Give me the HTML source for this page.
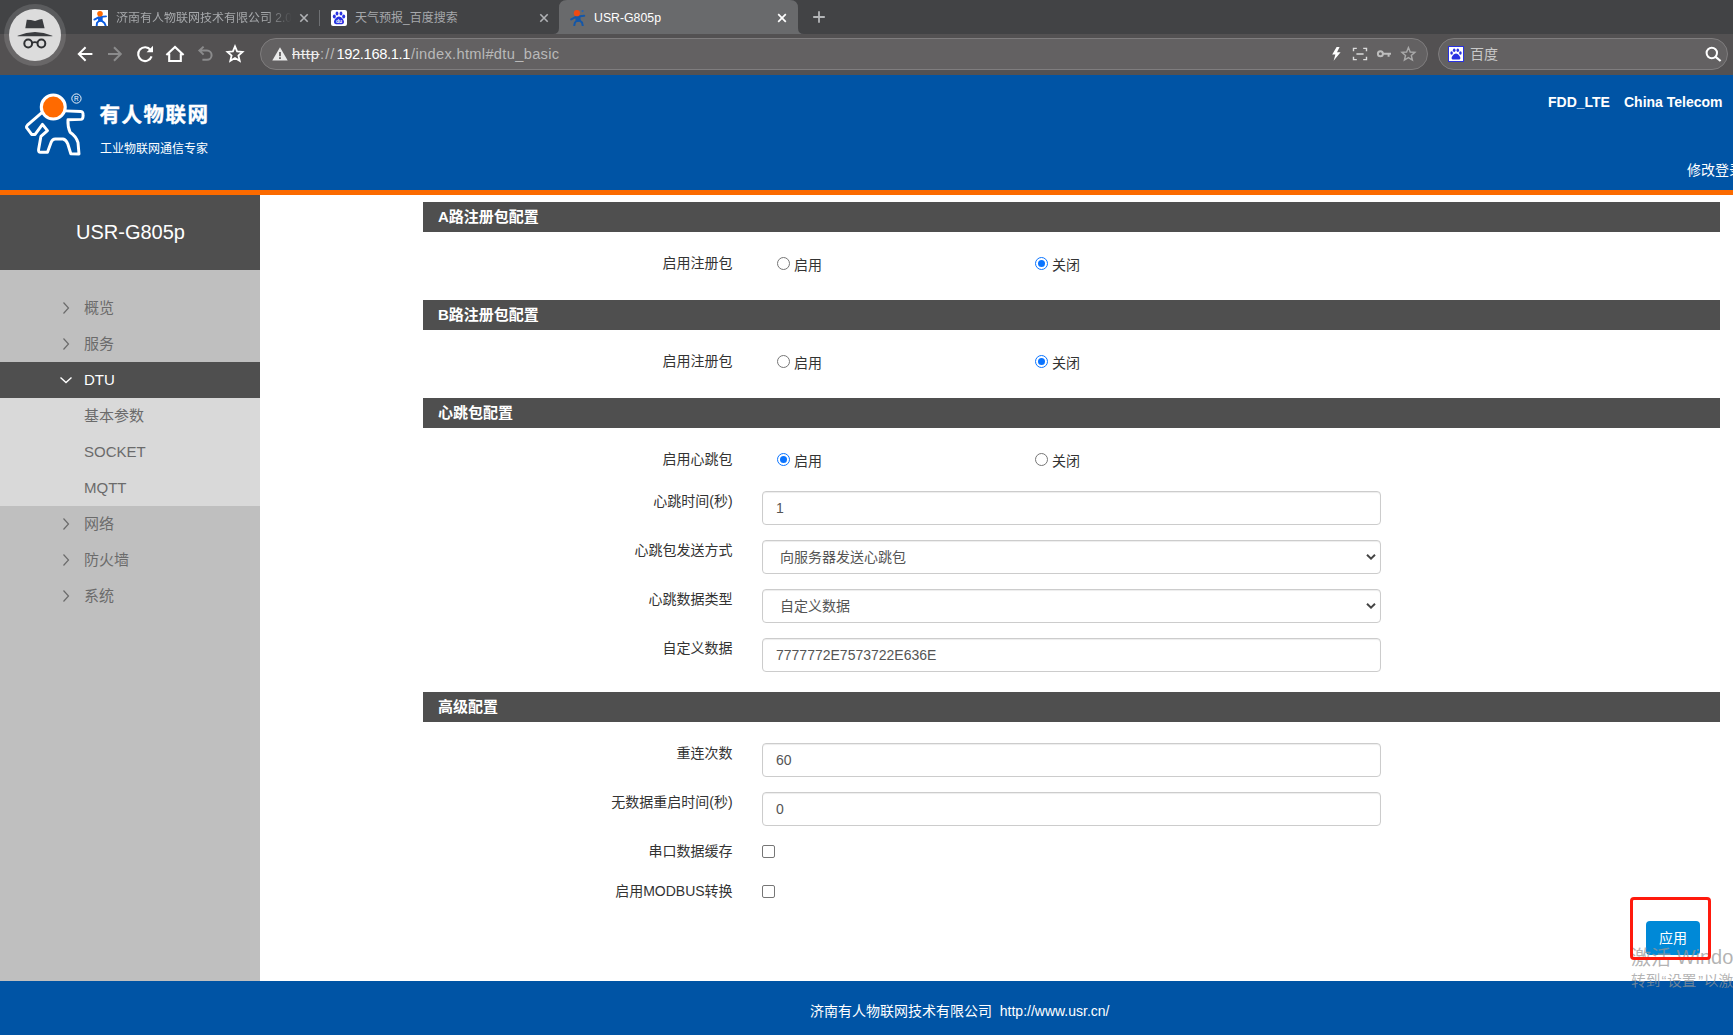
<!DOCTYPE html>
<html lang="zh-CN">
<head>
<meta charset="utf-8">
<title>USR-G805p</title>
<style>
*{box-sizing:border-box;margin:0;padding:0}
html,body{width:1733px;height:1035px;overflow:hidden;background:#fff}
body{position:relative;font-family:"Liberation Sans","Noto Sans CJK SC",sans-serif;font-size:14px;color:#333}
.abs{position:absolute}
.t{position:absolute;white-space:nowrap;line-height:1}
/* browser chrome */
#tabstrip{left:0;top:0;width:1733px;height:34px;background:#424345}
#toolbar{left:0;top:34px;width:1733px;height:41px;background:#535152}
.pill{position:absolute;top:38px;height:32px;border-radius:16px;background:#636162;border:1px solid #7f7d7e}
.tabtxt{font-size:12px;color:#a6a8ab;top:12px}
/* page */
#hdr{left:0;top:75px;width:1733px;height:115px;background:#0054a5}
#orange{left:0;top:190px;width:1733px;height:5px;background:#fb6a00}
#side{left:0;top:195px;width:260px;height:786px;background:#bfbfbf}
#sidehead{left:0;top:0;width:260px;height:75px;background:#4f4f4f}
.mi{position:absolute;left:0;width:260px;height:36px}
.mi .t{left:84px;top:10px;font-size:15px;color:#6b6b6b}
.mi svg{position:absolute}
#foot{left:0;top:981px;width:1733px;height:54px;background:#0054a5}
.sec{position:absolute;left:423px;width:1297px;height:30px;background:#4f4f4f}
.sec .t{left:15px;top:7px;font-size:15px;font-weight:bold;color:#fff}
.lab{position:absolute;left:432.6px;width:300px;text-align:right;font-size:14px;line-height:14px;color:#333;white-space:nowrap}
.inp{position:absolute;left:762px;width:619px;height:34px;border:1px solid #ccc;border-radius:4px;background:#fff;box-shadow:inset 0 1px 1px rgba(0,0,0,.075)}
.inp .t{left:13px;top:9px;font-size:14px;color:#555}
.inp.sel .t{left:17px}
.inp svg{position:absolute;right:3px;top:11px}
.radio{position:absolute;width:13px;height:13px;border-radius:50%;border:1px solid #767676;background:#fff}
.radio.on{border-color:#0a74ff}
.radio.on::after{content:"";position:absolute;left:2px;top:2px;width:7px;height:7px;border-radius:50%;background:#0a74ff}
.rl{position:absolute;font-size:14px;line-height:14px;color:#333;white-space:nowrap}
.chk{position:absolute;left:762px;width:13px;height:13px;border:1px solid #767676;border-radius:2px;background:#fff}
</style>
</head>
<body>
<!-- BROWSER CHROME -->
<div class="abs" id="tabstrip"></div>
<div class="abs" id="toolbar"></div>

<!-- active tab -->
<svg class="abs" style="left:553px;top:0" width="251" height="34" viewBox="0 0 251 34"><path d="M0 34 Q6 34 6 28 L6 8 Q6 0 14 0 L237 0 Q245 0 245 8 L245 28 Q245 34 251 34 Z" fill="#696a6c"/></svg>
<!-- incognito -->
<div class="abs" style="left:4px;top:4px;width:62px;height:62px;border-radius:50%;background:rgba(255,255,255,.13)"></div>
<div class="abs" style="left:9px;top:9px;width:52px;height:52px;border-radius:50%;background:#dcdcdc"></div>
<svg class="abs" style="left:9px;top:9px" width="52" height="52" viewBox="0 0 52 52">
<path d="M17.8 10.8 L22 11 L26 12 L30.5 10.6 L33.3 10 L35.6 19.2 L16.3 19.2 Z" fill="#3a3c3f"/>
<path d="M8.6 27.2 L8.6 26.7 Q26 19.4 43.4 26.7 L43.4 27.2 Z" fill="#3a3c3f"/>
<circle cx="19.2" cy="34.5" r="3.9" fill="none" stroke="#2f3134" stroke-width="2"/>
<circle cx="32.4" cy="34.5" r="3.9" fill="none" stroke="#2f3134" stroke-width="2"/>
<path d="M23 33.8 Q25.9 32.4 28.8 33.8" fill="none" stroke="#2f3134" stroke-width="1.6"/>
</svg>
<!-- tab 1 -->
<div class="abs" style="left:92px;top:10px;width:16px;height:16px;background:#fff"></div>
<svg class="abs" style="left:92px;top:10px" width="16" height="16" viewBox="0 0 16 16"><path d="M7 7.2 L2.4 9.6 M8.6 6.9 L14 6.4 M7.4 7.4 L7.8 11 M9.4 7.4 L8.8 11 M7 10.8 L5 12.8 L4.7 15.6 M9.4 10.4 L12.4 12.9 L13.6 15.6" fill="none" stroke="#0a5be0" stroke-width="1.9" stroke-linecap="round" stroke-linejoin="round"/><path d="M5.6 7 L10.6 6.4 L10.6 10.4 L6.4 11.6 Z" fill="#0a5be0"/><circle cx="8" cy="3.7" r="2.8" fill="#ff6a00"/></svg>
<div class="t tabtxt" style="left:116px;width:176px;overflow:hidden;-webkit-mask-image:linear-gradient(90deg,#000 150px,transparent 176px);mask-image:linear-gradient(90deg,#000 150px,transparent 176px)">济南有人物联网技术有限公司 2.0</div>
<svg class="abs" style="left:299px;top:13px" width="10" height="10" viewBox="0 0 10 10"><path d="M1.3 1.3 L8.7 8.7 M8.7 1.3 L1.3 8.7" stroke="#b0b2b5" stroke-width="1.6"/></svg>
<div class="abs" style="left:319px;top:10px;width:1px;height:16px;background:#6e7073"></div>
<!-- tab 2 -->
<div class="abs" style="left:331px;top:10px;width:16px;height:16px;background:#fff;border-radius:2px"></div>
<svg class="abs" style="left:331px;top:10px" width="16" height="16" viewBox="0 0 16 16"><g fill="#2932e1"><ellipse cx="3.3" cy="6.6" rx="1.5" ry="2"/><ellipse cx="6" cy="3.6" rx="1.4" ry="2"/><ellipse cx="10" cy="3.6" rx="1.4" ry="2"/><ellipse cx="12.7" cy="6.6" rx="1.5" ry="2"/><path d="M8 6.6 C10.5 6.6 13 10 13 12 C13 14.6 10.5 14.2 8 14.2 C5.5 14.2 3 14.6 3 12 C3 10 5.5 6.6 8 6.6 Z"/></g><text x="8" y="13.2" font-size="5" font-weight="bold" fill="#fff" text-anchor="middle" font-family="Liberation Sans, sans-serif">du</text></svg>
<div class="t tabtxt" style="left:355px">天气预报_百度搜索</div>
<svg class="abs" style="left:539px;top:13px" width="10" height="10" viewBox="0 0 10 10"><path d="M1.3 1.3 L8.7 8.7 M8.7 1.3 L1.3 8.7" stroke="#b0b2b5" stroke-width="1.6"/></svg>
<!-- tab 3 -->
<svg class="abs" style="left:570px;top:10px" width="16" height="16" viewBox="0 0 16 16"><circle cx="12.6" cy="1.1" r="1.1" fill="#2a64b0"/><path d="M6 6.8 L1.2 9.4 M8 6.4 L14.2 5.7 M7 7 L7.6 11 M9.2 7 L8.6 11 M6.8 10.6 L4.9 12.6 L4.3 15.3 M9.4 10.2 L12 12.6 L12.7 15.5" fill="none" stroke="#1457a8" stroke-width="2" stroke-linecap="round" stroke-linejoin="round"/><path d="M4.8 6.6 L10.4 6 L10.6 10.2 L6 11.6 Z" fill="#1457a8"/><circle cx="6.9" cy="3.2" r="3.1" fill="#f04a12"/></svg>
<div class="t" style="left:594px;top:11.5px;font-size:12.3px;color:#fff">USR-G805p</div>
<svg class="abs" style="left:777px;top:13px" width="10" height="10" viewBox="0 0 10 10"><path d="M1.2 1.2 L8.8 8.8 M8.8 1.2 L1.2 8.8" stroke="#fff" stroke-width="1.7"/></svg>
<svg class="abs" style="left:813px;top:11px" width="12" height="12" viewBox="0 0 12 12"><path d="M6 0.2 V11.8 M0.2 6 H11.8" stroke="#b4b6b8" stroke-width="1.8"/></svg>
<!-- nav icons -->
<svg class="abs" style="left:76px;top:44px" width="170" height="20" viewBox="0 0 170 20" fill="none" stroke-linecap="butt" stroke-linejoin="miter">
<path d="M16.4 10 H3 M9.6 3.2 L2.8 10 L9.6 16.8" stroke="#fff" stroke-width="2"/>
<path d="M32 10 H44.6 M38 3.2 L44.8 10 L38 16.8" stroke="#8b8b8c" stroke-width="2"/>
<path d="M74.6 6 A6.9 6.9 0 1 0 75.6 12.4" stroke="#fff" stroke-width="2.1"/><path d="M70.6 8.2 H77 V1.8 Z" fill="#fff" stroke="none"/>
<path d="M90.4 11 L99 3 L107.6 11 M93.2 9.4 V17 H104.8 V9.4" stroke="#fff" stroke-width="2.1"/>
<path d="M123.6 6.6 H131 A4.6 4.6 0 0 1 131 15.8 H126.4 M127.6 2.6 L123.4 6.6 L127.6 10.6" stroke="#8b8b8c" stroke-width="2"/>
<path d="M159 2.4 L161.1 7.4 L166.5 7.9 L162.4 11.5 L163.7 16.8 L159 14 L154.3 16.8 L155.6 11.5 L151.5 7.9 L156.9 7.4 Z" stroke="#fff" stroke-width="1.8" stroke-linejoin="miter"/>
</svg>
<!-- address pill -->
<div class="pill" style="left:260px;width:1168px"></div>
<svg class="abs" style="left:272px;top:47px" width="16" height="14" viewBox="0 0 16 14"><path d="M8 0.3 L15.7 13.5 H0.3 Z" fill="#eaeaea"/><rect x="7.1" y="5" width="1.8" height="4.2" fill="#636162"/><rect x="7.1" y="10.2" width="1.8" height="1.8" fill="#636162"/></svg>
<div class="t" style="left:292px;top:47px;font-size:14.67px;color:#eee;text-decoration:line-through;letter-spacing:.79px">http</div>
<div class="t" style="left:320px;top:47px;font-size:14.67px;color:#b9b9b9;letter-spacing:1.1px">://</div>
<div class="t" style="left:336.5px;top:47px;font-size:14.67px;color:#fff;letter-spacing:-.36px">192.168.1.1</div>
<div class="t" style="left:411px;top:47px;font-size:14.67px;color:#b9b9b9;letter-spacing:.32px">/index.html#dtu_basic</div>
<svg class="abs" style="left:1328px;top:45px" width="92" height="18" viewBox="0 0 92 18" fill="none">
<path d="M8.6 2 L4.2 9.4 H7.4 L5.6 15.8 L12.6 7.2 H9 L11.6 2 Z" fill="#fff"/>
<path d="M25.5 6.2 V3.4 H28.8 M35.2 3.4 H38.5 V6.2 M38.5 11.8 V14.6 H35.2 M28.8 14.6 H25.5 V11.8 M28.4 9 H35.6" stroke="#dcdcdc" stroke-width="1.4"/>
<circle cx="52.4" cy="8.8" r="2.5" stroke="#bdbdbd" stroke-width="2"/><path d="M55 8.8 H63 M60.6 8.8 V11.8" stroke="#bdbdbd" stroke-width="2"/>
<path d="M80.4 2.6 L82.2 7 L86.9 7.4 L83.3 10.5 L84.4 15.1 L80.4 12.6 L76.4 15.1 L77.5 10.5 L73.9 7.4 L78.6 7 Z" stroke="#a9a9a9" stroke-width="1.4"/>
</svg>
<!-- search pill -->
<div class="pill" style="left:1438px;width:290px"></div>
<div class="abs" style="left:1448px;top:46px;width:16px;height:16px;background:#fff;border:1px solid #2932e1"></div>
<svg class="abs" style="left:1448px;top:46px" width="16" height="16" viewBox="0 0 16 16"><g fill="#2932e1"><ellipse cx="3.6" cy="7" rx="1.3" ry="1.8"/><ellipse cx="6.2" cy="4.2" rx="1.3" ry="1.8"/><ellipse cx="9.8" cy="4.2" rx="1.3" ry="1.8"/><ellipse cx="12.4" cy="7" rx="1.3" ry="1.8"/><path d="M8 7.4 C10 7.4 12.4 10.4 12.4 12 C12.4 14 10.4 13.4 8 13.4 C5.6 13.4 3.6 14 3.6 12 C3.6 10.4 6 7.4 8 7.4 Z"/></g></svg>
<div class="t" style="left:1470px;top:46.5px;font-size:14px;color:#c9c9c9">百度</div>
<svg class="abs" style="left:1703px;top:44px" width="20" height="20" viewBox="0 0 20 20" fill="none"><circle cx="8.8" cy="9" r="5.2" stroke="#fff" stroke-width="2"/><path d="M12.6 12.8 L17.6 17" stroke="#fff" stroke-width="2.2"/></svg>

<!-- PAGE -->
<div class="abs" id="hdr"></div>
<div class="abs" id="orange"></div>

<svg class="abs" style="left:15px;top:85px" width="90" height="80" viewBox="0 0 1164 1035">
<path d="M340 365 L160 520 Q135 545 160 565 L215 640 L260 640 L355 510 L420 590 L335 665 L305 835 Q300 870 330 870 L420 870 L470 735 Q485 700 520 698 L620 698 Q660 705 682 760 L722 890 L828 893 L815 745 Q790 660 712 610 Q680 540 685 450 L855 445 Q885 440 880 395 Q885 345 850 343 L650 335" fill="none" stroke="#fff" stroke-width="38" stroke-linejoin="round" stroke-linecap="round"/>
<circle cx="495" cy="285" r="155" fill="#ff6a00" stroke="#fff" stroke-width="40"/>
<circle cx="795" cy="175" r="60" fill="none" stroke="#fff" stroke-width="12"/>
<text x="795" y="207" font-size="84" fill="#fff" text-anchor="middle" font-family="Liberation Sans, sans-serif">R</text>
</svg>
<div class="t" style="left:99.5px;top:105px;font-size:20.5px;font-weight:bold;color:#fff;letter-spacing:1.5px;-webkit-text-stroke:.4px #fff">有人物联网</div>
<div class="t" style="left:100px;top:143px;font-size:12px;color:#fff">工业物联网通信专家</div>
<div class="t" style="left:1548px;top:95px;font-size:14px;font-weight:bold;color:#fff">FDD_LTE</div>
<div class="t" style="left:1624px;top:95px;font-size:14px;font-weight:bold;color:#fff">China Telecom</div>
<div class="t" style="left:1687px;top:163px;font-size:14px;color:#fff">修改登录密码</div>

<div class="abs" id="side">
<div class="abs" id="sidehead"><div class="t" style="left:76px;top:27px;font-size:20px;color:#fff">USR-G805p</div></div>

<div class="mi" style="top:95px"><svg style="left:62px;top:11px" width="8" height="14" viewBox="0 0 8 14"><path d="M1.5 1.5 L6.5 7 L1.5 12.5" fill="none" stroke="#6b6b6b" stroke-width="1.2"/></svg><div class="t">概览</div></div>
<div class="mi" style="top:131px"><svg style="left:62px;top:11px" width="8" height="14" viewBox="0 0 8 14"><path d="M1.5 1.5 L6.5 7 L1.5 12.5" fill="none" stroke="#6b6b6b" stroke-width="1.2"/></svg><div class="t">服务</div></div>
<div class="mi" style="top:167px;background:#4f4f4f"><svg style="left:59px;top:14px" width="14" height="8" viewBox="0 0 14 8"><path d="M1.5 1.5 L7 6.5 L12.5 1.5" fill="none" stroke="#fff" stroke-width="1.4"/></svg><div class="t" style="color:#fff">DTU</div></div>
<div class="mi" style="top:203px;background:#d9d9d9"><div class="t">基本参数</div></div>
<div class="mi" style="top:239px;background:#d9d9d9"><div class="t">SOCKET</div></div>
<div class="mi" style="top:275px;background:#d9d9d9"><div class="t">MQTT</div></div>
<div class="mi" style="top:311px"><svg style="left:62px;top:11px" width="8" height="14" viewBox="0 0 8 14"><path d="M1.5 1.5 L6.5 7 L1.5 12.5" fill="none" stroke="#6b6b6b" stroke-width="1.2"/></svg><div class="t">网络</div></div>
<div class="mi" style="top:347px"><svg style="left:62px;top:11px" width="8" height="14" viewBox="0 0 8 14"><path d="M1.5 1.5 L6.5 7 L1.5 12.5" fill="none" stroke="#6b6b6b" stroke-width="1.2"/></svg><div class="t">防火墙</div></div>
<div class="mi" style="top:383px"><svg style="left:62px;top:11px" width="8" height="14" viewBox="0 0 8 14"><path d="M1.5 1.5 L6.5 7 L1.5 12.5" fill="none" stroke="#6b6b6b" stroke-width="1.2"/></svg><div class="t">系统</div></div>

</div>

<div class="sec" style="top:202px"><div class="t">A路注册包配置</div></div>
<div class="lab" style="top:256px">启用注册包</div>
<div class="radio" style="left:777px;top:257px"></div><div class="rl" style="left:794px;top:258px">启用</div>
<div class="radio on" style="left:1035px;top:257px"></div><div class="rl" style="left:1052px;top:258px">关闭</div>

<div class="sec" style="top:300px"><div class="t">B路注册包配置</div></div>
<div class="lab" style="top:354px">启用注册包</div>
<div class="radio" style="left:777px;top:355px"></div><div class="rl" style="left:794px;top:356px">启用</div>
<div class="radio on" style="left:1035px;top:355px"></div><div class="rl" style="left:1052px;top:356px">关闭</div>

<div class="sec" style="top:398px"><div class="t">心跳包配置</div></div>
<div class="lab" style="top:452px">启用心跳包</div>
<div class="radio on" style="left:777px;top:453px"></div><div class="rl" style="left:794px;top:454px">启用</div>
<div class="radio" style="left:1035px;top:453px"></div><div class="rl" style="left:1052px;top:454px">关闭</div>

<div class="lab" style="top:494px">心跳时间(秒)</div>
<div class="inp" style="top:491px"><div class="t">1</div></div>
<div class="lab" style="top:543px">心跳包发送方式</div>
<div class="inp sel" style="top:540px"><div class="t">向服务器发送心跳包</div><svg width="12" height="10" viewBox="0 0 12 10"><path d="M2 2.8 L6 6.6 L10 2.8" fill="none" stroke="#444" stroke-width="2"/></svg></div>
<div class="lab" style="top:592px">心跳数据类型</div>
<div class="inp sel" style="top:589px"><div class="t">自定义数据</div><svg width="12" height="10" viewBox="0 0 12 10"><path d="M2 2.8 L6 6.6 L10 2.8" fill="none" stroke="#444" stroke-width="2"/></svg></div>
<div class="lab" style="top:641px">自定义数据</div>
<div class="inp" style="top:638px"><div class="t">7777772E7573722E636E</div></div>

<div class="sec" style="top:692px"><div class="t">高级配置</div></div>
<div class="lab" style="top:746px">重连次数</div>
<div class="inp" style="top:743px"><div class="t">60</div></div>
<div class="lab" style="top:795px">无数据重启时间(秒)</div>
<div class="inp" style="top:792px"><div class="t">0</div></div>
<div class="lab" style="top:844px">串口数据缓存</div>
<div class="chk" style="top:845px"></div>
<div class="lab" style="top:884px">启用MODBUS转换</div>
<div class="chk" style="top:885px"></div>

<div class="abs" style="left:1646px;top:921px;width:54px;height:34px;border-radius:4px;background:#0089d7"><div class="t" style="left:13px;top:10px;font-size:14px;color:#fff">应用</div></div>
<div class="t" style="z-index:5;left:1631px;top:948px;font-size:20px;color:rgba(150,150,150,.72)">激活 <span style="position:relative;top:-1.5px">Windows</span></div>
<div class="t" style="z-index:5;left:1631px;top:974px;font-size:14.67px;color:rgba(150,150,150,.72)">转到<span style="margin:0 .8px 0 1.2px">“</span>设置<span style="margin:0 .8px 0 1.6px">”</span>以激活 Windows。</div>
<div class="abs" style="z-index:6;left:1630px;top:897px;width:81px;height:63px;border:3px solid #ff1a0d;border-radius:4px"></div>

<div class="abs" id="foot"><div class="t" style="left:810px;top:23px;font-size:14px;color:#fff">济南有人物联网技术有限公司&nbsp; http://www.usr.cn/</div></div>



</body>
</html>
